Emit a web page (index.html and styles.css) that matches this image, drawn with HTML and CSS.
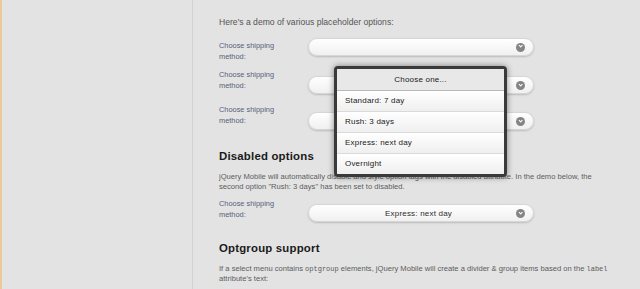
FILE: index.html
```html
<!DOCTYPE html>
<html lang="en">
<head>
  <meta charset="UTF-8">
  <title>Select menus - placeholders</title>
  <link rel="stylesheet" href="styles.css">
</head>
<body>
  <div class="page">
    <div class="sidebar"></div>

    <div class="content">
      <p class="intro">Here's a demo of various placeholder options:</p>

      <div class="field field-first">
        <label class="field-label">Choose shipping method:</label>
        <div class="select">
          <span class="select-text"></span>
          <span class="select-icon"></span>
        </div>
      </div>

      <div class="field field-second">
        <label class="field-label">Choose shipping method:</label>
        <div class="select">
          <span class="select-text"></span>
          <span class="select-icon"></span>
        </div>
      </div>

      <div class="field field-third">
        <label class="field-label">Choose shipping method:</label>
        <div class="select">
          <span class="select-text"></span>
          <span class="select-icon"></span>
        </div>
      </div>

      <h2 class="section-title title-disabled">Disabled options</h2>
      <p class="section-text">jQuery Mobile will automatically disable and style option tags with the disabled attribute. In the demo below, the second option "Rush: 3 days" has been set to disabled.</p>

      <div class="field field-fourth">
        <label class="field-label">Choose shipping method:</label>
        <div class="select">
          <span class="select-text">Express: next day</span>
          <span class="select-icon"></span>
        </div>
      </div>

      <h2 class="section-title title-optgroup">Optgroup support</h2>
      <p class="section-text">If a select menu contains <code>optgroup</code> elements, jQuery Mobile will create a divider &amp; group items based on the <code>label</code> attribute's text:</p>
    </div>
  </div>

  <!-- open menu of the second select -->
  <div class="menu">
    <div class="menu-header">Choose one...</div>
    <ul class="menu-list">
      <li>Standard: 7 day</li>
      <li>Rush: 3 days</li>
      <li>Express: next day</li>
      <li>Overnight</li>
    </ul>
  </div>
</body>
</html>
```

FILE: styles.css
```css
/* jQuery Mobile demo look */
body {
  margin: 0;
  padding: 0;
  background-color: #e3e3e3;
  font-family: 'Liberation Sans', Arial, sans-serif;
  color: #555;
}

.page {
  display: flex;
  min-height: 289px;
}

.sidebar {
  width: 190px;
  flex-shrink: 0;
  border-left: 2px solid #ebc99b;
  border-right: 1px solid #d2d2d2;
}

.content {
  width: 398px;
  padding-left: 26px;
  padding-top: 17px;
}

.intro {
  margin: 0;
  font-size: 8.6px;
  line-height: 10px;
  color: #555;
}

.field {
  display: flex;
  align-items: flex-start;
}

.field-label {
  width: 89px;
  flex-shrink: 0;
  font-size: 7.4px;
  line-height: 10.7px;
  color: #56617a;
  padding-right: 20px;
  box-sizing: border-box;
}

.field-first {
  margin-top: 11px;
}

.field-first .field-label {
  margin-top: 3px;
}

.field-second {
  margin-top: 8px;
}

.field-second .select {
  margin-top: 6px;
}

.field-third {
  margin-top: 11px;
}

.field-third .select {
  margin-top: 7px;
}

.field-fourth {
  margin-top: 7px;
}

.field-fourth .select {
  margin-top: 5px;
}

.select {
  width: 226px;
  height: 18px;
  box-sizing: border-box;
  border: 1px solid #d6d6d6;
  border-radius: 9px;
  background: linear-gradient(#ffffff, #f0f0f0);
  box-shadow: 0 1px 2px rgba(0, 0, 0, 0.18);
  display: flex;
  align-items: center;
  padding: 0 8px 0 12px;
}

.select-text {
  flex: 1;
  text-align: center;
  font-size: 8px;
  color: #2a2a2a;
  letter-spacing: 0.2px;
  text-shadow: 0 1px 0 #fff;
}

.select-icon {
  width: 9px;
  height: 9px;
  border-radius: 50%;
  background-color: #858585;
  position: relative;
}

.select-icon::after {
  content: "";
  position: absolute;
  left: 2.6px;
  top: 1.6px;
  width: 2.4px;
  height: 2.4px;
  border-right: 1.4px solid #fff;
  border-bottom: 1.4px solid #fff;
  transform: rotate(45deg);
}

.section-title {
  margin: 0;
  font-size: 11.4px;
  line-height: 14px;
  font-weight: bold;
  color: #1a1a1a;
  letter-spacing: 0.2px;
}

.title-disabled {
  margin-top: 19px;
}

.title-optgroup {
  margin-top: 19px;
}

.section-text {
  margin: 9px 0 0;
  font-size: 7.6px;
  line-height: 10px;
  color: #5c5c5c;
}

.section-text code {
  font-family: 'Liberation Mono', 'Courier New', monospace;
  font-size: 7px;
}

.menu {
  position: absolute;
  left: 334px;
  top: 66px;
  width: 173px;
  box-sizing: border-box;
  border: 3px solid #3a3a3a;
  border-radius: 4px;
  box-shadow: 0 0 6px rgba(0, 0, 0, 0.45);
  background-color: #f6f6f6;
  overflow: hidden;
}

.menu-header {
  height: 22px;
  box-sizing: border-box;
  border-bottom: 1px solid #b8b8b8;
  background-color: #e8e8e8;
  text-align: center;
  font-size: 8px;
  line-height: 21px;
  color: #1a1a1a;
  letter-spacing: 0.2px;
}

.menu-list {
  list-style: none;
  margin: 0;
  padding: 0;
}

.menu-list li {
  height: 21px;
  box-sizing: border-box;
  border-top: 1px solid #dadada;
  background: linear-gradient(#ffffff, #efefef);
  padding-left: 8px;
  font-size: 8px;
  line-height: 20px;
  color: #1a1a1a;
  letter-spacing: 0.2px;
}

.menu-list li:first-child {
  border-top: none;
  height: 20px;
}
```
